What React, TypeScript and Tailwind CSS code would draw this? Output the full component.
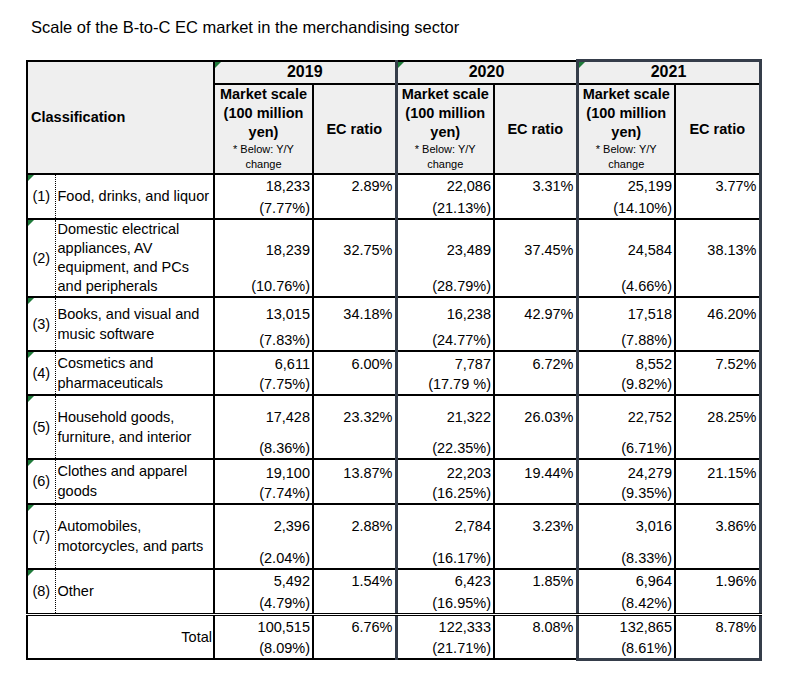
import React from "react";

type Cell = [string, string, string];
type Row = {
  n: string;
  label: string[];
  v: Cell[];
  h: string;
  inner: string;
  mt: string;
  pt: string;
  lead: string;
};

const rows: Row[] = [
  {
    n: "(1)",
    label: ["Food, drinks, and liquor"],
    v: [
      ["18,233", "(7.77%)", "2.89%"],
      ["22,086", "(21.13%)", "3.31%"],
      ["25,199", "(14.10%)", "3.77%"],
    ],
    h: "h-[45px]",
    inner: "h-[43px]",
    mt: "mt-[1px]",
    pt: "pt-[1px]",
    lead: "leading-[20px]",
  },
  {
    n: "(2)",
    label: ["Domestic electrical", "appliances, AV", "equipment, and PCs", "and peripherals"],
    v: [
      ["18,239", "(10.76%)", "32.75%"],
      ["23,489", "(28.79%)", "37.45%"],
      ["24,584", "(4.66%)", "38.13%"],
    ],
    h: "h-[78px]",
    inner: "h-[76px]",
    mt: "mt-[20px]",
    pt: "pt-[20px]",
    lead: "leading-[19px]",
  },
  {
    n: "(3)",
    label: ["Books, and visual and", "music software"],
    v: [
      ["13,015", "(7.83%)", "34.18%"],
      ["16,238", "(24.77%)", "42.97%"],
      ["17,518", "(7.88%)", "46.20%"],
    ],
    h: "h-[54px]",
    inner: "h-[52px]",
    mt: "mt-[6px]",
    pt: "pt-[6px]",
    lead: "leading-[20px]",
  },
  {
    n: "(4)",
    label: ["Cosmetics and", "pharmaceuticals"],
    v: [
      ["6,611", "(7.75%)", "6.00%"],
      ["7,787", "(17.79 %)", "6.72%"],
      ["8,552", "(9.82%)", "7.52%"],
    ],
    h: "h-[44px]",
    inner: "h-[42px]",
    mt: "mt-[2px]",
    pt: "pt-[2px]",
    lead: "leading-[20px]",
  },
  {
    n: "(5)",
    label: ["Household goods,", "furniture, and interior"],
    v: [
      ["17,428", "(8.36%)", "23.32%"],
      ["21,322", "(22.35%)", "26.03%"],
      ["22,752", "(6.71%)", "28.25%"],
    ],
    h: "h-[64px]",
    inner: "h-[62px]",
    mt: "mt-[11px]",
    pt: "pt-[11px]",
    lead: "leading-[20px]",
  },
  {
    n: "(6)",
    label: ["Clothes and apparel", "goods"],
    v: [
      ["19,100", "(7.74%)", "13.87%"],
      ["22,203", "(16.25%)", "19.44%"],
      ["24,279", "(9.35%)", "21.15%"],
    ],
    h: "h-[45px]",
    inner: "h-[43px]",
    mt: "mt-[3px]",
    pt: "pt-[3px]",
    lead: "leading-[20px]",
  },
  {
    n: "(7)",
    label: ["Automobiles,", "motorcycles, and parts"],
    v: [
      ["2,396", "(2.04%)", "2.88%"],
      ["2,784", "(16.17%)", "3.23%"],
      ["3,016", "(8.33%)", "3.86%"],
    ],
    h: "h-[65px]",
    inner: "h-[63px]",
    mt: "mt-[11px]",
    pt: "pt-[11px]",
    lead: "leading-[20px]",
  },
  {
    n: "(8)",
    label: ["Other"],
    v: [
      ["5,492", "(4.79%)", "1.54%"],
      ["6,423", "(16.95%)", "1.85%"],
      ["6,964", "(8.42%)", "1.96%"],
    ],
    h: "h-[45px]",
    inner: "h-[43px]",
    mt: "mt-[1px]",
    pt: "pt-[1px]",
    lead: "leading-[20px]",
  },
];

const total: Cell[] = [
  ["100,515", "(8.09%)", "6.76%"],
  ["122,333", "(21.71%)", "8.08%"],
  ["132,865", "(8.61%)", "8.78%"],
];

const years = ["2019", "2020", "2021"];

const Tri = () => (
  <span className="absolute left-0 top-0 w-0 h-0 border-t-[6px] border-r-[6px] border-t-[#1f7a3a] border-r-transparent" />
);

const msBorder = [
  "",
  "border-l-[3px] border-l-[#353d4a]",
  "border-l-[3px] border-l-[#353d4a]",
];
const ecBorder = ["", "", "border-r-[3px] border-r-[#353d4a]"];

export default function App() {
  const base = "border-2 border-black p-0";
  return (
    <div className="bg-white w-[799px] h-[697px] font-['Liberation_Sans',Arial,sans-serif] text-black pl-[26px]">
      <div className="pt-[17px] pl-[5px] text-[16.5px] leading-[20px]">
        Scale of the B-to-C EC market in the merchandising sector
      </div>
      <table className="mt-[22px] border-collapse table-fixed w-[733px] text-[14.5px] leading-[20px]">
        <colgroup>
          <col className="w-[28px]" />
          <col className="w-[159px]" />
          <col className="w-[99px]" />
          <col className="w-[83px]" />
          <col className="w-[98px]" />
          <col className="w-[83px]" />
          <col className="w-[98px]" />
          <col className="w-[85px]" />
        </colgroup>
        <thead>
          <tr className="h-[23px]">
            <th
              rowSpan={2}
              colSpan={2}
              className={`${base} bg-[#efefef] text-left align-middle pl-[3px] font-bold text-[14.5px]`}
            >
              Classification
            </th>
            {years.map((y, i) => (
              <th
                key={y}
                colSpan={2}
                className={`${base} relative bg-[#efefef] text-center align-middle font-bold text-[16px] leading-[20px] ${msBorder[i]} ${ecBorder[i]} ${
                  i === 2 ? "border-t-[3px] border-t-[#353d4a]" : ""
                }`}
              >
                <Tri />
                {y}
              </th>
            ))}
          </tr>
          <tr className="h-[90px]">
            {years.map((y, i) => (
              <React.Fragment key={y}>
                <th className={`${base} bg-[#efefef] text-center align-middle ${msBorder[i]}`}>
                  <div className="font-bold text-[14.5px] leading-[19px]">
                    Market scale
                    <br />
                    (100 million
                    <br />
                    yen)
                  </div>
                  <div className="font-normal text-[11px] leading-[15px]">
                    * Below: Y/Y
                    <br />
                    change
                  </div>
                </th>
                <th
                  className={`${base} bg-[#efefef] text-center align-middle font-bold text-[14.5px] ${ecBorder[i]}`}
                >
                  EC ratio
                </th>
              </React.Fragment>
            ))}
          </tr>
        </thead>
        <tbody>
          {rows.map((r) => (
            <tr key={r.n} className={r.h}>
              <td
                className={`${base} relative text-center align-middle border-r-[1px] [border-right-style:dotted]`}
              >
                <Tri />
                {r.n}
              </td>
              <td
                className={`${base} align-middle pl-[2px] whitespace-nowrap ${r.lead} border-l-[1px] [border-left-style:dotted]`}
              >
                {r.label.map((l, k) => (
                  <div key={k}>{l}</div>
                ))}
              </td>
              {r.v.map((c, i) => (
                <React.Fragment key={i}>
                  <td className={`${base} align-top ${msBorder[i]}`}>
                    <div className={`flex flex-col ${r.inner} text-right pr-[2px]`}>
                      <div className={r.mt}>{c[0]}</div>
                      <div className="mt-auto">{c[1]}</div>
                    </div>
                  </td>
                  <td className={`${base} align-top text-right pr-[2px] ${r.pt} ${ecBorder[i]}`}>
                    {c[2]}
                  </td>
                </React.Fragment>
              ))}
            </tr>
          ))}
          <tr className="h-[45px]">
            <td
              colSpan={2}
              className={`${base} text-right align-middle pr-[1px] border-t-[3px] [border-top-style:double]`}
            >
              Total
            </td>
            {total.map((c, i) => (
              <React.Fragment key={i}>
                <td
                  className={`${base} align-top border-t-[3px] [border-top-style:double] ${msBorder[i]} ${
                    i === 2 ? "border-b-[3px] border-b-[#353d4a]" : ""
                  }`}
                >
                  <div className="flex flex-col h-[42px] text-right pr-[2px]">
                    <div className="mt-[1px]">{c[0]}</div>
                    <div className="mt-auto">{c[1]}</div>
                  </div>
                </td>
                <td
                  className={`${base} align-top text-right pr-[2px] pt-[1px] border-t-[3px] [border-top-style:double] ${ecBorder[i]} ${
                    i === 2 ? "border-b-[3px] border-b-[#353d4a]" : ""
                  }`}
                >
                  {c[2]}
                </td>
              </React.Fragment>
            ))}
          </tr>
        </tbody>
      </table>
    </div>
  );
}
